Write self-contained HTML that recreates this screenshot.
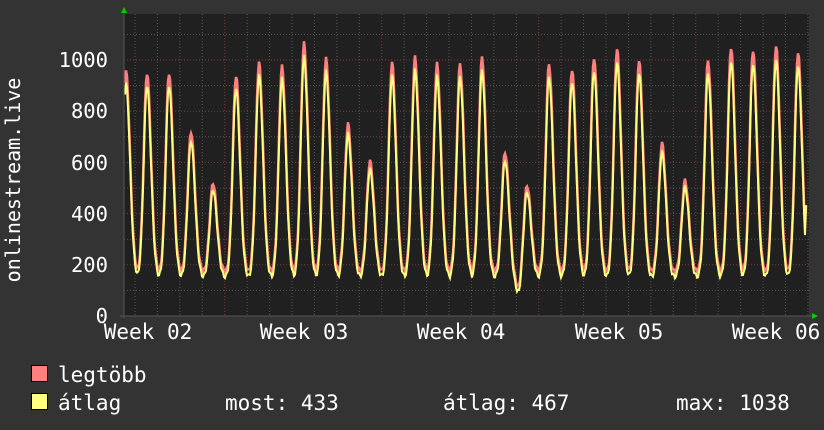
<!DOCTYPE html>
<html><head><meta charset="utf-8"><style>
body{margin:0;background:#333;width:824px;height:430px;overflow:hidden;font-family:"DejaVu Sans Mono","Liberation Mono",monospace;color:#fff}
svg{position:absolute;left:0;top:0}
</style></head><body>
<svg id="g" width="824" height="430" xmlns="http://www.w3.org/2000/svg" font-family="DejaVu Sans Mono, Liberation Mono, monospace" font-size="20">
<rect x="0" y="0" width="824" height="430" fill="#333"/>
<rect x="124" y="14" width="685" height="302" fill="#202020"/>
<g id="grid"></g>
<g id="data"></g>
<line x1="124" y1="12" x2="124" y2="318" stroke="#555" stroke-width="1"/>
<line x1="120" y1="316" x2="812" y2="316" stroke="#555" stroke-width="1"/>
<polygon points="121,13 127,13 124,7" fill="#0c0"/>
<polygon points="812,313 812,319 818,316" fill="#0c0"/>
<g fill="#fff" text-anchor="end" font-size="20.5">
<text x="108" y="67">1000</text><text x="108" y="118">800</text><text x="108" y="170">600</text><text x="108" y="221">400</text><text x="108" y="272">200</text><text x="108" y="323">0</text>
</g>
<g fill="#fff" text-anchor="middle" font-size="21">
<text x="148" y="339">Week 02</text><text x="304" y="339">Week 03</text><text x="461" y="339">Week 04</text><text x="619" y="339">Week 05</text><text x="776" y="339">Week 06</text>
</g>
<text transform="translate(20,180) rotate(-90)" text-anchor="middle" fill="#fff" font-size="20">onlinestream.live</text>
<rect x="31.5" y="365.5" width="16" height="16" fill="#ff7f7f" stroke="#000"/>
<rect x="31.5" y="393.5" width="16" height="16" fill="#ffff7f" stroke="#000"/>
<g fill="#fff" font-size="21">
<text x="58" y="382">legtöbb</text>
<text x="58" y="410">átlag</text>
<text x="225" y="410">most: 433</text>
<text x="443" y="410">átlag: 467</text>
<text x="676" y="410">max: 1038</text>
</g>
</svg>
<script>
function Y(v){return 316-v*0.256;}
var grid=document.getElementById('grid'),s='';
for(var v=100;v<=1100;v+=100){var y=Y(v);if(y<14)break;var maj=v%200==0;
s+='<line x1="124" x2="809" y1="'+y+'" y2="'+y+'" stroke="'+(maj?'#7a3a3a':'#555')+'" stroke-dasharray="1,2"/>';}
for(var x=135;x<809;x+=22.43){var mj=[225,382,539,696].some(function(m){return Math.abs(m-x)<3});
s+='<line x1="'+x+'" x2="'+x+'" y1="14" y2="316" stroke="'+(mj?'#7a3a3a':'#555')+'" stroke-dasharray="1,2"/>';}
grid.innerHTML=s;
var pk=[[126,955],[147,950],[169,950],[191,720],[213,520],[236,940],[259,990],[282,975],[304,1065],[326,1005],[348,750],[370,605],[392,990],[415,1010],[437,985],[460,985],[482,1010],[505,640],[527,510],[549,985],[572,965],[594,1010],[617,1045],[639,1000],[662,675],[685,530],[708,1000],[731,1050],[753,1040],[776,1055],[798,1030],[820,950]];
function val(x,scale,tr){var t0=tr-(Math.abs(x-519)<8?(8-Math.abs(x-519))*9:0);var best=t0;for(var i=0;i<pk.length;i++){var d=x-pk[i][0];var w=d<0?4.6:5.6;var f=Math.exp(-Math.pow(Math.abs(d)/w,2));var v=t0+(pk[i][1]*scale-t0)*f;if(v>best)best=v;}
return best+Math.sin(x*1.7)*8;}
function path(scale,tr){var p='';for(var x=125;x<=806;x++){var v=val(x,scale,tr);if(x==806)v=433;p+=(p?'L':'M')+x+','+Y(v).toFixed(1);}return p;}
document.getElementById('data').innerHTML='<path d="'+path(1,170)+'" fill="none" stroke="#ff7f7f" stroke-width="2.5"/><path d="'+path(0.95,150)+'" fill="none" stroke="#ffff7f" stroke-width="2"/>';
</script>
</body></html>
